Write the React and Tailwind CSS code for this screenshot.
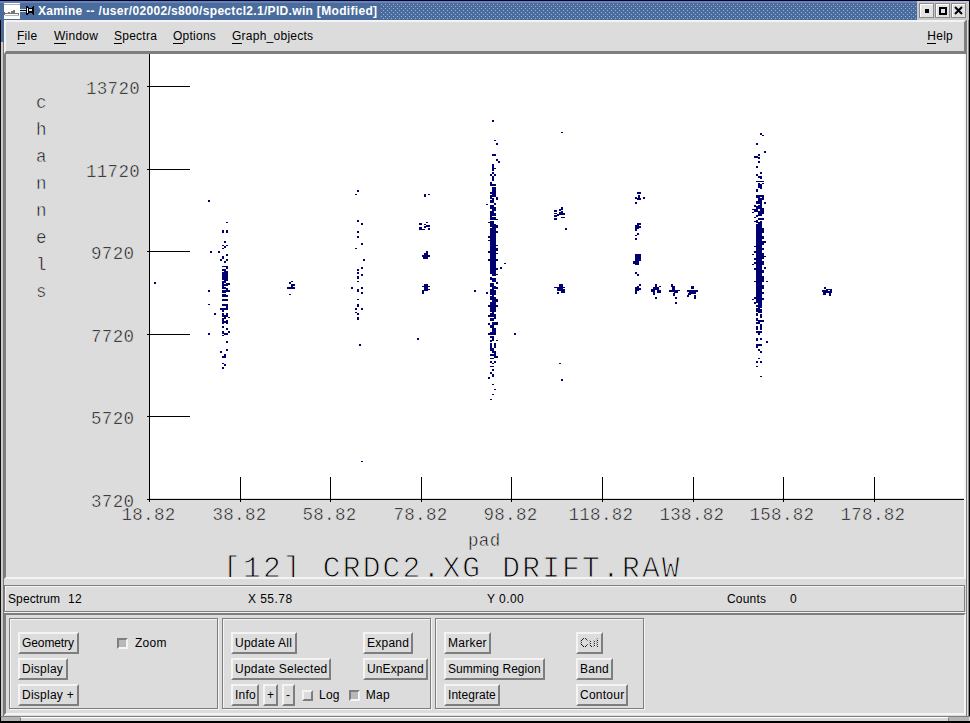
import React from 'react';

const NAVY = '#000070';

// square bins, [x, y], 2x2
const dots = [
  [154, 282], [208, 200], [224, 241], [224, 246], [210, 251], [218, 251], [226, 254], [220, 259], [226, 259], [224, 261],
  [208, 290], [214, 313], [208, 333], [226, 328], [228, 331], [226, 341], [226, 349], [220, 351], [224, 354], [224, 364], [222, 367],
  [289, 282],
  [357, 190], [357, 220], [361, 223], [357, 231], [357, 236], [361, 243], [363, 259], [361, 267], [357, 269], [357, 272],
  [361, 274], [351, 287], [361, 287], [361, 292], [355, 308], [361, 308], [357, 313], [359, 344],
  [417, 338], [474, 290], [514, 333], [500, 267], [561, 379], [565, 228],
  [426, 251], [428, 228], [424, 226],
  [492, 120], [496, 143], [496, 159], [498, 161], [492, 172], [490, 174], [494, 174],
  [488, 236], [488, 251], [488, 259], [488, 305], [488, 315], [488, 323], [488, 333], [486, 292], [496, 259], [496, 268],
  [490, 361], [494, 361], [492, 369], [490, 372], [488, 377],
  [760, 133], [756, 143], [764, 151], [758, 154], [758, 157], [758, 161], [756, 166], [760, 172], [756, 174], [758, 176],
  [764, 202], [764, 241], [764, 267], [766, 341], [756, 361], [760, 361], [758, 349], [760, 351], [754, 205], [754, 258],
  [643, 197], [635, 202], [637, 233], [635, 238], [635, 272], [637, 274], [639, 284],
  [655, 297], [675, 297], [675, 302], [687, 295], [824, 287],
];

// half height bins, [x, y], 2x1
const dashes = [
  [226, 222], [222, 245], [226, 245], [222, 248], [208, 304], [222, 335], [222, 363], [291, 281], [289, 294],
  [355, 194], [355, 248], [357, 281], [357, 299], [355, 312], [361, 461],
  [428, 194], [426, 222], [561, 132], [559, 363], [504, 263],
  [494, 140], [494, 168], [486, 204], [488, 222], [488, 240], [496, 245], [496, 253], [496, 274], [496, 340],
  [492, 363], [492, 384], [494, 389], [492, 394], [490, 399],
  [762, 135], [766, 281], [758, 358], [756, 366], [760, 376], [754, 217], [754, 221],
  [752, 209], [752, 212], [752, 254], [752, 264], [752, 299], [764, 256], [635, 235], [659, 286],
];

// merged bins, [x, y, w, h]
const runs = [
  // 35
  [222, 230, 2, 3], [226, 230, 2, 3], [222, 256, 2, 3], [222, 266, 4, 1], [226, 266, 2, 3], [222, 269, 4, 2], [224, 271, 4, 3],
  [222, 272, 2, 2], [222, 274, 6, 3], [224, 277, 4, 4], [222, 277, 2, 3], [222, 281, 4, 2], [226, 283, 4, 2], [222, 282, 2, 5],
  [224, 284, 4, 2], [222, 287, 4, 2], [226, 288, 2, 2], [222, 290, 8, 2], [222, 292, 4, 1], [222, 294, 4, 3], [226, 295, 2, 2],
  [222, 299, 6, 2], [226, 304, 2, 4], [222, 304, 4, 2], [220, 308, 8, 2], [222, 310, 2, 2], [222, 313, 2, 4], [226, 313, 2, 2],
  [224, 315, 4, 2], [222, 318, 2, 6], [224, 316, 2, 3], [228, 317, 2, 1], [226, 320, 2, 4], [224, 321, 2, 2], [222, 326, 2, 2],
  [222, 331, 2, 3], [224, 333, 4, 2], [222, 356, 4, 2],
  // 50
  [291, 284, 4, 2], [291, 286, 2, 1], [287, 287, 8, 2],
  // 65
  [357, 276, 2, 3], [357, 289, 2, 3], [357, 304, 2, 3], [357, 317, 2, 3],
  // 80
  [424, 194, 2, 3], [419, 223, 3, 2], [424, 224, 2, 1], [426, 225, 4, 2], [419, 227, 3, 3], [422, 229, 3, 1],
  [424, 253, 4, 2], [422, 255, 8, 2], [423, 257, 5, 2], [424, 284, 4, 7], [422, 286, 8, 1], [428, 289, 2, 1], [422, 290, 2, 4],
  // 95
  [492, 154, 4, 2], [492, 164, 2, 7], [492, 176, 2, 5], [490, 182, 2, 4], [492, 184, 4, 2], [492, 187, 4, 5], [490, 192, 4, 2],
  [492, 192, 4, 5], [496, 197, 2, 3], [490, 195, 2, 4], [492, 198, 2, 4], [490, 200, 4, 3], [494, 203, 2, 2], [490, 205, 4, 4],
  [492, 207, 4, 4], [490, 211, 4, 4], [490, 214, 2, 3], [492, 213, 4, 3], [490, 217, 6, 3], [496, 219, 2, 1], [490, 221, 4, 4],
  [492, 224, 4, 4], [490, 225, 2, 2], [496, 225, 2, 3], [490, 228, 2, 2], [492, 228, 4, 4], [490, 230, 6, 34], [496, 231, 2, 2],
  [496, 248, 2, 3], [492, 263, 4, 4], [490, 264, 4, 10], [494, 265, 2, 10], [492, 273, 4, 3], [490, 277, 2, 3], [492, 278, 4, 4],
  [496, 282, 2, 2], [490, 283, 4, 4], [492, 286, 4, 3], [496, 287, 2, 2], [490, 289, 4, 6], [494, 290, 2, 5], [492, 294, 2, 4],
  [490, 296, 2, 4], [496, 299, 2, 3], [492, 297, 4, 5], [490, 302, 6, 10], [496, 305, 2, 2], [490, 313, 4, 4], [492, 311, 2, 2],
  [494, 314, 2, 5], [490, 318, 4, 3], [492, 322, 6, 3], [490, 325, 4, 3], [492, 328, 2, 4], [494, 328, 2, 4], [490, 332, 6, 3],
  [490, 336, 4, 2], [492, 338, 2, 3], [490, 340, 2, 2], [490, 343, 2, 8], [494, 343, 2, 5], [492, 348, 2, 5], [490, 354, 4, 2],
  [494, 351, 2, 5], [494, 356, 4, 2], [490, 358, 4, 1], [490, 366, 4, 1], [492, 374, 2, 3],
  // 110
  [561, 207, 2, 3], [554, 210, 3, 2], [559, 209, 2, 2], [554, 213, 3, 1], [559, 212, 2, 3], [561, 211, 2, 4], [563, 213, 2, 2],
  [557, 214, 2, 2], [554, 215, 3, 2], [561, 217, 4, 1], [554, 218, 3, 2], [559, 284, 4, 3], [554, 287, 11, 1], [557, 288, 6, 3],
  [561, 289, 4, 4], [557, 292, 2, 2],
  // 127
  [637, 192, 4, 2], [638, 195, 2, 3], [635, 197, 2, 2], [637, 198, 4, 2], [637, 223, 4, 2], [635, 225, 4, 4], [639, 226, 2, 2],
  [635, 229, 2, 2], [635, 254, 6, 7], [635, 261, 4, 4], [633, 261, 2, 3], [637, 286, 2, 2], [635, 287, 4, 4], [639, 288, 2, 2],
  [635, 291, 2, 3],
  // 131, 135, 139
  [655, 284, 2, 4], [653, 287, 6, 3], [651, 289, 3, 3], [657, 290, 4, 3], [653, 290, 2, 5], [671, 284, 2, 3], [672, 286, 3, 6],
  [669, 290, 4, 2], [673, 290, 7, 1], [674, 291, 4, 2], [673, 293, 2, 3], [691, 286, 3, 3], [687, 290, 11, 2], [689, 291, 6, 3],
  [688, 293, 3, 2], [694, 292, 2, 2], [694, 295, 2, 4],
  // 154
  [754, 156, 4, 2], [760, 176, 2, 3], [756, 181, 4, 1], [760, 181, 4, 1], [758, 183, 2, 5], [760, 184, 2, 5], [756, 189, 2, 3],
  [762, 183, 2, 1], [756, 195, 4, 3], [760, 195, 4, 2], [758, 198, 4, 4], [762, 197, 2, 3], [756, 201, 4, 3], [760, 202, 2, 4],
  [758, 205, 4, 4], [756, 206, 2, 4], [760, 208, 4, 6], [754, 209, 4, 3], [758, 211, 4, 5], [756, 215, 2, 2], [758, 218, 4, 2],
  [762, 218, 2, 2], [756, 220, 2, 3], [760, 221, 2, 4], [758, 222, 2, 2], [756, 224, 6, 79], [762, 228, 2, 5], [762, 236, 2, 3],
  [762, 241, 2, 4], [762, 248, 2, 2], [762, 253, 2, 6], [754, 251, 2, 2], [754, 246, 2, 1], [754, 262, 2, 2], [754, 268, 2, 2],
  [762, 261, 2, 4], [762, 270, 2, 3], [762, 276, 2, 6], [762, 285, 2, 4], [754, 281, 2, 1], [762, 292, 2, 2], [754, 297, 2, 2],
  [754, 302, 2, 2], [758, 303, 4, 5], [756, 305, 2, 2], [756, 308, 4, 4], [760, 309, 2, 4], [758, 311, 4, 2], [762, 298, 2, 2],
  [756, 313, 2, 3], [760, 314, 2, 4], [756, 318, 2, 3], [758, 320, 6, 2], [756, 322, 4, 2], [760, 324, 2, 6], [756, 326, 2, 4],
  [756, 331, 6, 2], [758, 333, 2, 2], [756, 338, 2, 3], [760, 338, 2, 2], [756, 344, 2, 4], [758, 344, 4, 2],
  // 170
  [826, 289, 6, 1], [822, 290, 2, 2], [823, 291, 9, 2], [824, 290, 4, 3], [829, 293, 2, 3], [823, 293, 3, 2], [830, 289, 2, 2],
];

const yTicks = [
  [86, '13720', 86],
  [169, '11720', 86],
  [251, '9720', 91],
  [334, '7720', 91],
  [416, '5720', 91],
  [499, '3720', 91],
];

const xTicks = [
  [240, '38.82', 213],
  [330, '58.82', 303],
  [421, '78.82', 394],
  [511, '98.82', 484],
  [602, '118.82', 569],
  [693, '138.82', 660],
  [783, '158.82', 750],
  [874, '178.82', 841],
];

const Label = ({ x, y, children, size = 17.5, step = 10.75, thin = 0.55 }) => (
  <text
    x={x}
    y={y}
    fontSize={size}
    textLength={children.length * step}
    fill="#000"
    stroke="#dcdcdc"
    strokeWidth={thin}
  >
    {children}
  </text>
);

const Spectrum = () => (
  <svg
    width="958"
    height="523"
    viewBox="6 54 958 523"
    className="block font-['Liberation_Mono',monospace]"
    shapeRendering="crispEdges"
  >
    <rect x="6" y="54" width="958" height="523" fill="#dcdcdc" />
    <rect x="150" y="54" width="814" height="444" fill="#fff" />
    {yTicks.map(([y, text, x]) => <Label key={text} x={x} y={y + 8}>{text}</Label>)}
    <Label x={121.5} y={520}>18.82</Label>
    {xTicks.map(([, text, x]) => <Label key={text} x={x - 0.5} y={520}>{text}</Label>)}
    {'channels'.split('').map((c, i) => <Label key={i} x={36} y={108 + i * 27}>{c}</Label>)}
    <Label x={468} y={546}>pad</Label>
    <Label x={223} y={576.5} size={29.5} step={19.85} thin={1}>[12] CRDC2.XG DRIFT.RAW</Label>
    <g fill="#000">
      <rect x="149" y="54" width="1" height="448" />
      <rect x="147" y="499" width="817" height="1" />
      {yTicks.map(([y]) => <rect key={y} x="147" y={y} width="43" height="1" />)}
      {xTicks.map(([x]) => <rect key={x} x={x} y="477" width="1" height="25" />)}
    </g>
    <g fill={NAVY}>
      {dots.map(([x, y], i) => <rect key={i} x={x} y={y} width="2" height="2" />)}
      {dashes.map(([x, y], i) => <rect key={i} x={x} y={y} width="2" height="1" />)}
      {runs.map(([x, y, w, h], i) => <rect key={i} x={x} y={y} width={w} height={h} />)}
    </g>
  </svg>
);

const MenuItem = ({ children, className = '' }) => (
  <div className={`leading-4 whitespace-pre ${className}`}>
    <span className="inline-block h-[15px] border-b border-black leading-[14px]">{children[0]}</span>
    {children.slice(1)}
  </div>
);

const Button = ({ children, className = '', textClass = '' }) => (
  <button
    className={`h-[22px] shrink-0 border-2 border-t-[#f4f4f4] border-l-[#f4f4f4] border-r-[#7e7e7e] border-b-[#7e7e7e] pl-[2px] text-left leading-[17px] whitespace-nowrap ${className}`}
  >
    <span className={textClass}>{children}</span>
  </button>
);

const Check = ({ on }) => (
  <span
    className={
      on
        ? 'h-[11px] w-[11px] shrink-0 border-2 border-t-[#7e7e7e] border-l-[#7e7e7e] border-r-[#f4f4f4] border-b-[#f4f4f4] bg-[#b9b9b9]'
        : 'h-[11px] w-[11px] shrink-0 border-2 border-t-[#f4f4f4] border-l-[#f4f4f4] border-r-[#7e7e7e] border-b-[#7e7e7e]'
    }
  />
);

// etched frame round one group of buttons
const Group = ({ children, className }) => (
  <div className={`h-[91px] shrink-0 border border-[#7e7e7e] shadow-[1px_1px_0_#f4f4f4,inset_1px_1px_0_#f4f4f4] ${className}`}>
    <div className="flex flex-col gap-1 pt-[13px]">{children}</div>
  </div>
);

const WindowButton = ({ children }) => (
  <div className="flex h-[15px] w-[15px] items-center justify-center border border-[#8a8a8a] bg-[#e2e2e2] shadow-[inset_1px_1px_0_#fff]">
    {children}
  </div>
);

const TitleBar = () => (
  <div className="flex h-5 shrink-0 border-t border-t-[#000030] bg-[#4a6c9c] shadow-[inset_0_2px_0_#6584b2]">
    <svg width="31" height="18" viewBox="4 1 31 18" className="ml-1" shapeRendering="crispEdges">
      <rect x="4" y="3" width="16" height="16" fill="#fff" />
      <rect x="4" y="4" width="16" height="1" fill="#b0b0b0" />
      <rect x="4" y="12" width="1" height="3" fill="#666" />
      <path d="M5 13.5h3v-1h1v1h2v-2h1v2h1v-3h1v3h4v1" fill="none" stroke="#777" />
      <rect x="5" y="15" width="14" height="1" fill="#b8b8b8" />
      <rect x="20" y="9" width="7" height="3" fill="#dde4ee" />
      <rect x="20" y="10" width="7" height="1" fill="#000" />
      <path d="M26 6h2v1h1v1h3v-1h1v-1h1v9h-1v-1h-1v-1h-3v1h-1v1h-2z" fill="#000" />
      <rect x="27" y="8" width="1" height="5" fill="#fff" />
      <rect x="29" y="9" width="3" height="2" fill="#dde4ee" />
    </svg>
    <div className="ml-[3px] w-[343px] pt-[2px] text-[12px] leading-[17px] font-bold tracking-[0.32px] whitespace-pre text-white">
      Xamine -- /user/02002/s800/spectcl2.1/PID.win [Modified]
    </div>
    <div className="mt-[3px] h-[15px] w-[535px] bg-[radial-gradient(circle_at_0.5px_0.5px,#9ab6da_0.6px,transparent_0.7px),radial-gradient(circle_at_2.5px_2.5px,#9ab6da_0.6px,transparent_0.7px)] bg-[length:4px_4px]" />
    <div className="ml-px flex h-[19px] w-[52px] items-center gap-px bg-[#c9c9c9] pl-[2px]">
      <WindowButton><div className="h-1 w-1 bg-black" /></WindowButton>
      <WindowButton><div className="h-2 w-2 border-2 border-black" /></WindowButton>
      <WindowButton>
        <svg width="9" height="9" viewBox="0 0 9 9">
          <path d="M1 1l7 7M8 1l-7 7" stroke="#000" strokeWidth="2" />
        </svg>
      </WindowButton>
    </div>
    <div className="w-px bg-black" />
  </div>
);

export default function App() {
  return (
    <div className="flex h-[723px] w-[970px] flex-col overflow-hidden bg-[#dcdcdc] font-['Liberation_Sans',Arial,sans-serif] text-[12px] text-black">
      <TitleBar />

      <div className="flex h-[696px] shrink-0">
        <div className="flex w-1 shrink-0 flex-col">
          <div className="h-[22px] border-l border-black bg-[#4a6c9c]" />
          <div className="flex-1 border-l border-[#111] bg-[#cfc9c9] shadow-[inset_-1px_0_0_#777]" />
        </div>

        <div className="flex w-[962px] shrink-0 flex-col">
          <div className="flex h-[34px] shrink-0 border-t-2 border-r-2 border-b-[3px] border-l-2 border-t-[#f4f4f4] border-r-[#7e7e7e] border-b-[#7e7e7e] border-l-[#f4f4f4] pt-[6px] tracking-[0.25px]">
            <MenuItem className="ml-[11px] w-[37px]">File</MenuItem>
            <MenuItem className="w-[60px]">Window</MenuItem>
            <MenuItem className="w-[59px]">Spectra</MenuItem>
            <MenuItem className="w-[59px]">Options</MenuItem>
            <MenuItem>Graph_objects</MenuItem>
            <MenuItem className="mr-[11px] ml-auto">Help</MenuItem>
          </div>

          <div className="h-[525px] shrink-0 border-r-2 border-b-2 border-l-2 border-r-[#f4f4f4] border-b-[#f4f4f4] border-l-[#7e7e7e]">
            <Spectrum />
          </div>

          <div className="h-[6px] shrink-0" />

          <div className="flex h-[27px] w-[961px] shrink-0 border border-[#7e7e7e] pt-[5px] pl-[3px] leading-4 tracking-[0.45px] whitespace-pre shadow-[0_1px_0_#f4f4f4,inset_1px_1px_0_#f4f4f4]">
            <div className="w-[60px] tracking-[0.1px]">Spectrum</div>
            <div className="w-[180px]">12</div>
            <div className="w-[239px]">X 55.78</div>
            <div className="w-[240px]">Y 0.00</div>
            <div className="w-[63px] tracking-[0.2px]">Counts</div>
            <div>0</div>
          </div>
          <div className="h-px shrink-0 bg-[#f4f4f4]" />

          <div className="flex h-[102px] shrink-0 border-2 border-t-[#7e7e7e] border-r-[#f4f4f4] border-b-[#f4f4f4] border-l-[#7e7e7e] pt-[3px] pl-[3px] tracking-[0.25px]">
            <Group className="w-[209px] pl-2">
              <div className="flex items-center">
                <Button className="w-[61px] tracking-[-0.1px]">Geometry</Button>
                <div className="ml-[38px] flex items-center gap-[7px]"><Check on />Zoom</div>
              </div>
              <Button className="w-[50px]">Display</Button>
              <Button className="w-[61px]">Display +</Button>
            </Group>

            <Group className="ml-1 w-[209px] pl-2">
              <div className="flex">
                <Button className="w-[66px]">Update All</Button>
                <Button className="ml-[66px] w-[50px]">Expand</Button>
              </div>
              <div className="flex">
                <Button className="w-[100px]">Update Selected</Button>
                <Button className="ml-[32px] w-[65px] tracking-[0.1px]">UnExpand</Button>
              </div>
              <div className="flex items-center">
                <Button className="w-[28px]">Info</Button>
                <Button className="ml-1 w-[15px]">+</Button>
                <Button className="ml-1 w-[13px]">-</Button>
                <div className="ml-[7px] flex items-center gap-[6px]"><Check />Log</div>
                <div className="ml-[9px] flex items-center gap-[6px]"><Check on />Map</div>
              </div>
            </Group>

            <Group className="ml-1 w-[209px] pl-2">
              <div className="flex">
                <Button className="w-[47px]">Marker</Button>
                <Button
                  className="ml-[85px] w-[27px]"
                  textClass="bg-[repeating-conic-gradient(#000_0_25%,#dcdcdc_0_50%)] bg-[length:2px_2px] bg-clip-text text-transparent"
                >
                  Cut
                </Button>
              </div>
              <div className="flex">
                <Button className="w-[101px] tracking-[0.05px]">Summing Region</Button>
                <Button className="ml-[31px] w-[37px]">Band</Button>
              </div>
              <div className="flex">
                <Button className="w-[56px] tracking-[0.05px]">Integrate</Button>
                <Button className="ml-[76px] w-[52px]">Contour</Button>
              </div>
            </Group>
          </div>
        </div>

        <div className="flex-1 border-r border-l border-r-black border-l-[#7e7e7e] bg-[#dcdcdc] shadow-[inset_-1px_0_0_#8a8a8a]" />
      </div>

      <div className="flex h-[5px] shrink-0 border-t border-l border-t-[#7e7e7e] border-l-black pr-px">
        <div className="w-[19px] bg-[#b4b4b4]" />
        <div className="flex-1 border-x border-t border-x-[#7e7e7e] border-t-white bg-[#d8d8d8]" />
        <div className="w-[20px] bg-[#b4b4b4]" />
      </div>
      <div className="h-[2px] shrink-0 bg-black" />
    </div>
  );
}
